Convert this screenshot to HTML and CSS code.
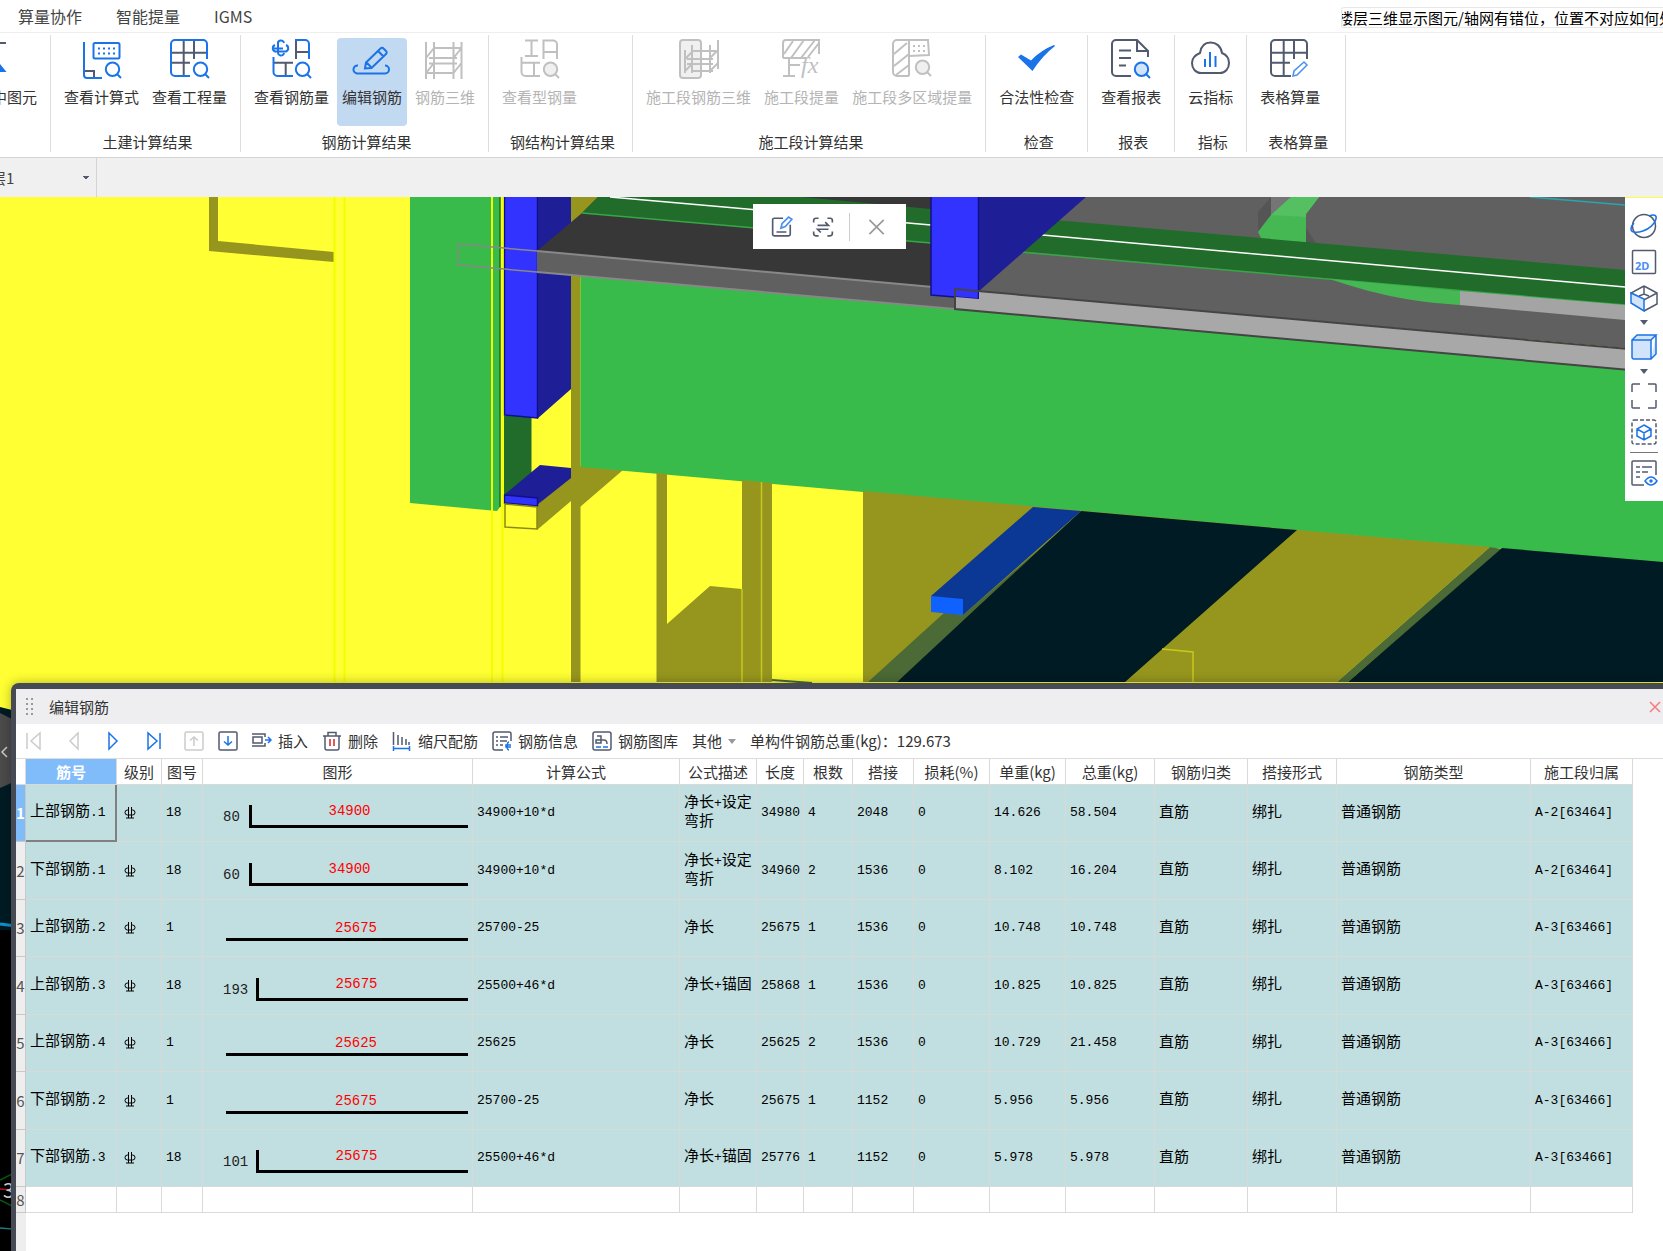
FILE: index.html
```html
<!DOCTYPE html>
<html lang="zh-CN">
<head>
    <meta charset="UTF-8">
    <meta name="viewport" content="width=device-width, initial-scale=1.0">
    <title>编辑钢筋</title>
    <link rel="stylesheet" href="styles.css">
</head>
<body>
    <header class="tabs">
        <nav>
            <a href="#">算量协作</a>
            <a href="#">智能提量</a>
            <a href="#">IGMS</a>
        </nav>
        <input class="search" type="text" aria-label="搜索" value="楼层三维显示图元/轴网有错位，位置不对应如何处理">
    </header>

    <div class="ribbon">
        <section class="group group-cut">
            <div class="tools">
                <button class="tool">
                    <svg class="icon" viewBox="0 0 40 40"><path class="dark" d="M4 4H19"/><path class="solid" d="M9 20L19.500 33H4z"/></svg>
                    选中图元
                </button>
            </div>
        </section>
        <section class="group">
            <div class="tools">
                <button class="tool">
                    <svg class="icon" viewBox="0 0 40 40"><path d="M2 3v33a3 3 0 0 0 3 3h15"/><path class="dark" d="M3 32h9v6"/><rect x="11.500" y="4" width="26" height="15.500" rx="1.500"/><path class="dots" d="M16 9.500h17M16 14.500h17"/><use href="#lens"/></svg>
                    查看计算式
                </button>
                <button class="tool">
                    <svg class="icon" viewBox="0 0 40 40"><path class="dark" d="M13.700 1v36M24 1v19M1 13.700h36M1 23.700h19"/><path d="M20 37H5a4 4 0 0 1-4-4V5a4 4 0 0 1 4-4h28a4 4 0 0 1 4 4v15"/><use href="#lens"/></svg>
                    查看工程量
                </button>
            </div>
            <h2>土建计算结果</h2>
        </section>
        <section class="group">
            <div class="tools">
                <button class="tool">
                    <svg class="icon" viewBox="0 0 40 40"><path class="dark" d="M24 1v19M24 13h13M1 23.700h20M13.700 24v13"/><path d="M23 1h10a4 4 0 0 1 4 4v15M1.500 18v15a4 4 0 0 0 4 4H21"/><path d="M12 4a3 3 0 0 0-6 1v8a3 3 0 0 0 6 1M3 6a3.500 3.500 0 0 0 0 6.500h11a3.500 3.500 0 0 0 0-6.500M2 9.500h9"/><use href="#lens"/></svg>
                    查看钢筋量
                </button>
                <button class="tool active">
                    <svg class="icon" viewBox="0 0 40 40"><path d="M6 26.500a4 4 0 0 0-1 8h28a4 4 0 0 0 0-8"/><path d="M13 29.500l1-6L28.500 9.500a2 2 0 0 1 3 0l2.500 2.500a2 2 0 0 1 0 3L19.500 29zM26 12l5.500 5.500M15 24l4 4"/></svg>
                    编辑钢筋
                </button>
                <button class="tool" disabled>
                    <svg class="icon" viewBox="0 0 40 40"><path d="M1 3v37M9 3v37M28.500 3v37M36.500 3v37M9 9h19.500M4 19h28M4 24.500h28M9 34h19.500M1 19l8-10M1 34l8-10M28.500 19l8-10M28.500 34l8-10M28.500 9h8M1 34h8"/></svg>
                    钢筋三维
                </button>
            </div>
            <h2>钢筋计算结果</h2>
        </section>
        <section class="group">
            <div class="tools">
                <button class="tool" disabled>
                    <svg class="icon" viewBox="0 0 40 40"><path d="M5 1.500h13M11.500 1v16M5 17h13M23.500 20V1.500H33a4 4 0 0 1 4 4V20M24 13h13M1.500 18v15a4 4 0 0 0 4 4H20M1 23.700h19M14 24v13"/><use href="#lens"/></svg>
                    查看型钢量
                </button>
            </div>
            <h2>钢结构计算结果</h2>
        </section>
        <section class="group">
            <div class="tools">
                <button class="tool" disabled>
                    <svg class="icon" viewBox="0 0 40 40"><rect class="pale" x="1" y="1" width="21" height="38" rx="3"/><path d="M6 11v23M13 6v28M31 6v28M39 1v29M13 12h24M8 20h26M8 25h26M12 32h22M6 20l8-8M6 32l8-8M30 20l9-9M31 32l8-8"/></svg>
                    施工段钢筋三维
                </button>
                <button class="tool" disabled>
                    <svg class="icon" viewBox="0 0 40 40"><path d="M1 19V4a3 3 0 0 1 3-3h33v14M1 19h24M2 15L11 2M9 19L22 1M19 19L33 1M26 18L37 4M7 19v18M1 37h12M7 26h11"/><text x="19" y="34">fx</text></svg>
                    施工段提量
                </button>
                <button class="tool" disabled>
                    <svg class="icon" viewBox="0 0 40 40"><path d="M17 37H5a4 4 0 0 1-4-4V5a4 4 0 0 1 4-4h31l1 15-20 1M17 1v36M2 15L15 4M2 27l15-12M4 36l13-10"/><path class="dots" d="M21 7h14M21 12h14"/><use href="#lens" y="-2"/></svg>
                    施工段多区域提量
                </button>
            </div>
            <h2>施工段计算结果</h2>
        </section>
        <section class="group">
            <div class="tools">
                <button class="tool">
                    <svg class="icon" viewBox="0 0 40 40"><path class="solid" d="M1 18l3-2.500 10 6Q24 11 37 6l1 1Q25 17 15.500 32z"/></svg>
                    合法性检查
                </button>
            </div>
            <h2>检查</h2>
        </section>
        <section class="group">
            <div class="tools">
                <button class="tool">
                    <svg class="icon" viewBox="0 0 40 40"><path class="dark" d="M20 37H5a4 4 0 0 1-4-4V5a4 4 0 0 1 4-4h21l11 11v6M26 1v11h11M8 11.500h12M8 19h12M8 26.500h7"/><use class="tint" href="#lens"/></svg>
                    查看报表
                </button>
            </div>
            <h2>报表</h2>
        </section>
        <section class="group">
            <div class="tools">
                <button class="tool">
                    <svg class="icon" viewBox="0 0 40 40"><path class="dark" d="M9 14C10 7 14 3.500 19.500 3.500S30 7 31 14c5 2 7 6 7 10 0 6-4 10-9 10H10C5 34 1 30 1 24c0-4 3-8 8-10z"/><path d="M14 20v8M19 13v15M24.500 17v11"/></svg>
                    云指标
                </button>
            </div>
            <h2>指标</h2>
        </section>
        <section class="group">
            <div class="tools">
                <button class="tool">
                    <svg class="icon" viewBox="0 0 40 40"><path class="dark" d="M21 37H5a4 4 0 0 1-4-4V5a4 4 0 0 1 4-4h28a4 4 0 0 1 4 4v15M13.700 1v36M24 1v19M1 13.700h36M1 23.700h19"/><path class="thin" d="M23 37l1-5 10-9 3 3-10 10z"/></svg>
                    表格算量
                </button>
            </div>
            <h2>表格算量</h2>
        </section>
    </div>

    <div class="floor-bar">
        <select class="floor" aria-label="楼层">
            <option>层1</option>
        </select>
    </div>

    <main class="workspace">
        <svg class="scene" viewBox="0 197 1663 1054" preserveAspectRatio="xMinYMin slice">
            <rect fill="#ffff33" y="197" width="1663" height="520"/>
            <!-- left edge strip below the yellow wall -->
            <path fill="#001b24" d="M0 707l16 4v540H0z"/>
            <path fill="#4b4b4b" d="M0 713l16 8v60l-16 7z"/>
            <path fill="#000" d="M0 930h16v321H0z"/>
            <path stroke="#0d94d4" stroke-width="3" d="M0 924l16 2"/>
            <path fill="none" stroke="#ccc" d="M7 747l-5 5 5 5"/>
            <path fill="none" stroke="#0a5a12" d="M0 1180l12-6M0 1200l12 6"/>
            <path stroke="#b01818" d="M0 1189l12 1"/>
            <path stroke="#1b7f86" d="M0 1228l12 1"/>
            <text x="3" y="1198" fill="#ddd" font-size="20">3</text>

            <!-- wall opening and columns on the left -->
            <path fill="#96961e" d="M209 197h9v44l116 11v10l-125-11z"/>
            <path stroke="#f2ff00" stroke-width="2" d="M334.500 197v485M344.500 197v485"/>
            <path fill="#39bb4b" d="M410 197h90v310l-3 4-87-8z"/>
            <path stroke="#216b2b" d="M500 197v310"/>
            <path fill="#216b2b" d="M504 416h27.500v57L504 500z"/>
            <path fill="#1e1e96" d="M537 197h34v192l-34 30z"/>
            <path fill="#3333ff" stroke="#10108a" stroke-width="1.500" d="M504.500 190h33v228l-33-3z"/>
            <path fill="#96961e" d="M537 504l34-28v25l-34 29zM580 466l43 4-43 37z"/>
            <path fill="#1e1e96" d="M504 495l36-30 31 3v10l-34 27z"/>
            <path fill="#3333ff" stroke="#10108a" d="M504.500 495l33 3v8l-33-3z"/>
            <path fill="#ffff33" stroke="#8a8a10" stroke-width="1.500" d="M505 504l32 3v22l-32-2z"/>
            <path stroke="#f2ff00" stroke-width="2" d="M492 197v485M502.500 197v485"/>
            <path fill="#96961e" d="M571 197h9.500v485H571zM580 197h20l-20 22z"/>

            <!-- slab and rear beam -->
            <path fill="#373737" d="M582 213l16-16h333v91l-394-37z"/>
            <path fill="#216b2b" d="M582 213l16-16h204l129 12v34z"/>
            <path fill="none" stroke="#35a845" d="M582 213l349 30"/>
            <path stroke="#fff" stroke-width="1.500" d="M610 197l321 28"/>
            <path fill="#606060" d="M537 251l418 38v20l-418-37zM955 289l22-92h648v151z"/>
            <path fill="#757575" d="M1271 197h20l-20 19z"/>
            <path fill="#555" d="M1258 212l13-15v18l-13 16zM1306 228l10 15h-10z"/>
            <path fill="#45b854" d="M1291 197h28l-13 17v30l-44-4-4-8 13-17z"/>
            <path fill="#54c062" d="M1291 197h28l-13 17v3l-35-2z"/>
            <path fill="#216b2b" d="M1020 217l605 53v35l-605-54z"/>
            <path stroke="#35a845" d="M1020 252l605 53"/>
            <path stroke="#fff" stroke-width="1.500" d="M1020 233l605 54"/>
            <path fill="#45b854" d="M1330 279l130 12v14c-50-3-90-12-130-26z"/>
            <path fill="#a4a4a4" d="M1460 291l165 14v15l-165-15z"/>
            <path stroke="#2aa5ae" d="M1530 197l95 8"/>
            <path fill="#39bb4b" d="M580.500 276l375 33 707.500 64v190l-1082.500-96z"/>
            <path fill="none" stroke="#888" stroke-width="2" d="M537 251l418 38M537 272l418 37"/>
            <path fill="none" stroke="#888" d="M537 251l-79-7v21l79 7"/>
            <path fill="#1e1e96" d="M978 197h108l-108 95z"/>
            <path fill="#3333ff" stroke="#10108a" stroke-width="1.500" d="M931 190h47.500v109l-47.500-4z"/>
            <path fill="#a8a8a8" d="M979 291l684 61v21l-707-64v-12l23 2z"/>
            <path fill="none" stroke="#444" stroke-width="2" d="M1663 352l-708-63v20l708 64"/>

            <!-- below the main beam -->
            <path fill="#96961e" d="M656.500 473l10.500 1v150l43-38 32 3v-109l30 3v199H656.500z"/>
            <path stroke="#c8c81e" d="M742 589v93M761.500 482v200"/>
            <path stroke="#4b6a35" stroke-width="2" d="M772 680l40 3"/>
            <path fill="#96961e" d="M863 491l434 39 193 17-153 135H863z"/>
            <path fill="#4b6a35" d="M868 682l77-70 18 3 110-95-176 162zM1490 547l12 2-154 133h-11z"/>
            <path fill="#001b24" d="M1081 511l216 19-172 152H897zM1502 548l161 14v120h-315z"/>
            <path fill="#0b3894" d="M931 596l102-89 48 4-118 104z"/>
            <path fill="#0f62ff" d="M931 596l32 3v16l-32-3z"/>
            <path fill="none" stroke="#c8c81e" d="M1162 649l31 3v30"/>
        </svg>

        <div class="stage">
            <div class="float-bar">
                <button aria-label="编辑"><svg viewBox="0 0 20 20"><path class="dark" d="M11 2H3a1.500 1.500 0 0 0-1.500 1.500v13A1.500 1.500 0 0 0 3 18h13a1.500 1.500 0 0 0 1.500-1.500V8M5 14.500h9"/><path class="thin" d="M9 11l1-4 6-6 3 2-6 6.500z"/></svg></button>
                <button aria-label="交换"><svg viewBox="0 0 20 20"><path class="dark" d="M1.500 6V4A2 2 0 0 1 3.500 2H6M14 2h2.500a2 2 0 0 1 2 2v2M1.500 14v2a2 2 0 0 0 2 2H6M14 18h2.500a2 2 0 0 0 2-2v-2M5 8.500h10l-3-3M15 12H5l3 3"/></svg></button>
                <span class="split"></span>
                <button aria-label="关闭"><svg viewBox="0 0 20 20"><path class="grey" d="M4 3.500l13 13M17 3.500l-13 13"/></svg></button>
            </div>

            <div class="view-bar">
                <button aria-label="动态观察"><svg viewBox="0 0 28 28"><circle class="dark" cx="14" cy="14" r="11.500"/><path d="M19 4c5-2 8-1 7 3-1 5-7 10-13 12S1 21 1 17c0-2 1-4 3-6"/></svg></button>
                <button aria-label="二维"><svg viewBox="0 0 28 28"><rect class="dark" x="2.500" y="2.500" width="23" height="23" rx="1"/><text x="5" y="22">2D</text></svg></button>
                <button aria-label="视角"><svg viewBox="0 0 28 28"><path class="dark" d="M14 2l13 7v11l-13 7M14 2L1 9l13 7 13-7M14 2v8M9 12l5-2 5 2"/><path class="tint" d="M1 9l13 6v12L1 19z"/></svg></button>
                <span class="caret"></span>
                <button aria-label="显示模式"><svg viewBox="0 0 28 28"><path class="tint" d="M2 7h19v19H4a2 2 0 0 1-2-2zM2 7l5-5h19l-5 5M26 2v19l-5 5"/></svg></button>
                <span class="caret"></span>
                <button aria-label="全屏"><svg viewBox="0 0 28 28"><path class="dark" d="M2 10V3a1 1 0 0 1 1-1h7M18 2h7a1 1 0 0 1 1 1v7M2 18v7a1 1 0 0 0 1 1h7M18 26h7a1 1 0 0 0 1-1v-7"/></svg></button>
                <button aria-label="局部三维"><svg viewBox="0 0 28 28"><rect class="dark" x="2" y="2" width="24" height="24" rx="2" stroke-dasharray="4 2"/><path d="M14 7l7 4v7l-7 4-7-4v-7zM7 11l7 4 7-4M14 15v7"/></svg></button>
                <hr>
                <button aria-label="显示设置"><svg viewBox="0 0 28 28"><path class="dark" d="M14 26H3a1 1 0 0 1-1-1V3a1 1 0 0 1 1-1h22a1 1 0 0 1 1 1v13M6 8h4M12 8h10M6 13h4M12 13h6M6 18h4"/><path d="M15 22q6-8 12 0-6 8-12 0z"/><circle cx="21" cy="22" r="1"/></svg></button>
            </div>
        </div>

        <section class="panel">
            <div class="panel-title">
                <svg class="grip" viewBox="0 0 8 18"><path d="M1 1h7M1 6h7M1 11h7M1 16h7"/></svg>
                <h1>编辑钢筋</h1>
                <button class="close" aria-label="关闭"><svg viewBox="0 0 12 12"><path d="M1 1l10 10M11 1L1 11"/></svg></button>
            </div>

            <div class="toolbar">
                <div class="steps">
                    <button aria-label="首条" disabled><svg viewBox="0 0 20 20"><path d="M3 2v16M16 2v16L7 10z"/></svg></button>
                    <button aria-label="上一条" disabled><svg viewBox="0 0 20 20"><path d="M14 2v16L6 10z"/></svg></button>
                    <button aria-label="下一条"><svg viewBox="0 0 20 20"><path d="M5 2v16l8-8z"/></svg></button>
                    <button aria-label="末条"><svg viewBox="0 0 20 20"><path d="M4 2v16l9-8zM16 2v16"/></svg></button>
                    <button aria-label="上移" disabled><svg viewBox="0 0 20 20"><rect x="1" y="1" width="18" height="18" rx="1.500"/><path d="M10 15V6M6 9.500L10 6l4 3.500"/></svg></button>
                </div>
                <button aria-label="下移"><svg viewBox="0 0 20 20"><rect class="dark" x="1" y="1" width="18" height="18" rx="1.500"/><path d="M10 5v9M6 10.500l4 3.500 4-3.500"/></svg></button>
                <button><svg viewBox="0 0 20 20"><path class="dark" d="M0 3h11M0 15h11M1 6h9v6H1zM10 3h3v3M11 15h2v-3"/><path d="M13 9h6M16 6l3 3-3 3"/></svg>插入</button>
                <button><svg viewBox="0 0 20 20"><path class="dark" d="M1 5h18M6 5V1.500h8V5M3 5v12a2 2 0 0 0 2 2h10a2 2 0 0 0 2-2V5"/><path class="red" d="M8 8v7M12 8v7"/></svg>删除</button>
                <button><svg viewBox="0 0 20 20"><path class="dark" d="M1.500 1v13M6 4v10M10 6v8M14 8v6M17 11v3"/><path d="M1 17.500h17M1.500 15v5M17.500 15v5"/></svg>缩尺配筋</button>
                <button><svg viewBox="0 0 20 20"><path class="dark" d="M11 19H3a2 2 0 0 1-2-2V3a2 2 0 0 1 2-2h14a2 2 0 0 1 2 2v7M4 6h2M8 6h8M4 10h2M8 10h7M4 14h2M8 14h3"/><path d="M17 11c-2 0-3 8 0 8M19 14h-5v2h5"/></svg>钢筋信息</button>
                <button><svg viewBox="0 0 20 20"><rect class="dark" x="1" y="1" width="18" height="18" rx="2"/><path class="dark" d="M5 5h4v7H4V9h8q3 0 3 4"/><path d="M4 16h5M11 16h5"/></svg>钢筋图库</button>
                <button>其他<span class="caret"></span></button>
                <output>单构件钢筋总重(kg)：129.673</output>
            </div>

            <div class="grid">
                <table>
                    <colgroup>
                        <col class="c10"><col class="c91"><col class="c45"><col class="c41"><col class="c270"><col class="c207">
                        <col class="c77"><col class="c47"><col class="c49"><col class="c61"><col class="c76"><col class="c76">
                        <col class="c89"><col class="c93"><col class="c89"><col class="c194"><col class="c102">
                    </colgroup>
                    <thead>
                        <tr>
                            <th></th>
                            <th class="current">筋号</th>
                            <th>级别</th>
                            <th>图号</th>
                            <th>图形</th>
                            <th>计算公式</th>
                            <th>公式描述</th>
                            <th>长度</th>
                            <th>根数</th>
                            <th>搭接</th>
                            <th>损耗(%)</th>
                            <th>单重(kg)</th>
                            <th>总重(kg)</th>
                            <th>钢筋归类</th>
                            <th>搭接形式</th>
                            <th>钢筋类型</th>
                            <th>施工段归属</th>
                        </tr>
                    </thead>
                    <tbody id="bars"></tbody>
                </table>
            </div>
        </section>
    </main>

    <svg class="defs">
        <symbol id="lens" viewBox="0 0 40 40"><circle cx="30.500" cy="30.300" r="6.700"/><path d="M35 35l4 4"/></symbol>
    </svg>

    <script>
        // name, shape no., hook, straight length, formula, description, length, count, lap, unit weight, total weight, section
        const bars = [
            ['上部钢筋.1', 18, 80, 34900, '34900+10*d', '净长+设定弯折', 34980, 4, 2048, '14.626', '58.504', 'A-2[63464]'],
            ['下部钢筋.1', 18, 60, 34900, '34900+10*d', '净长+设定弯折', 34960, 2, 1536, '8.102', '16.204', 'A-2[63464]'],
            ['上部钢筋.2', 1, 0, 25675, '25700-25', '净长', 25675, 1, 1536, '10.748', '10.748', 'A-3[63466]'],
            ['上部钢筋.3', 18, 193, 25675, '25500+46*d', '净长+锚固', 25868, 1, 1536, '10.825', '10.825', 'A-3[63466]'],
            ['上部钢筋.4', 1, 0, 25625, '25625', '净长', 25625, 2, 1536, '10.729', '21.458', 'A-3[63466]'],
            ['下部钢筋.2', 1, 0, 25675, '25700-25', '净长', 25675, 1, 1152, '5.956', '5.956', 'A-3[63466]'],
            ['下部钢筋.3', 18, 101, 25675, '25500+46*d', '净长+锚固', 25776, 1, 1152, '5.978', '5.978', 'A-3[63466]']
        ];

        const grade = '<svg class="grade" viewBox="0 0 12 13"><path d="M5 4H3.500a2.500 2.500 0 0 0 0 5h5a2.500 2.500 0 0 0 0-5H7M4.500 1v11M7.500 1v11M2 12h8"/></svg>';

        // latin runs use the narrow monospace face
        function mono(value) {
            return String(value).replace(/[\x21-\x7e]+/g, '<span class="mono">$&</span>');
        }

        function drawShape(hook, length) {
            if (!hook) {
                return `<svg class="shape" viewBox="0 0 269 56"><path d="M23 39.500H265"/><text class="len" x="153" y="32">${length}</text></svg>`;
            }
            const x = hook > 99 ? 54.5 : 47.5;
            return `<svg class="shape" viewBox="0 0 269 56"><path d="M${x} 20V41.500H265"/><text x="20" y="36">${hook}</text><text class="len" x="${x + 99}" y="30">${length}</text></svg>`;
        }

        let html = '';
        bars.forEach(function (b, i) {
            const cells = [b[4], b[5], b[6], b[7], b[8], 0, b[9], b[10], '直筋', '绑扎', '普通钢筋', b[11]];
            html += `<tr><th>${i + 1}</th><td>${mono(b[0])}</td><td>${grade}</td><td>${mono(b[1])}</td>`;
            html += `<td class="draw">${drawShape(b[2], b[3])}</td>`;
            html += cells.map(c => `<td>${mono(c)}</td>`).join('') + '</tr>';
        });
        html += '<tr class="blank"><th>8</th>' + '<td></td>'.repeat(16) + '</tr>';
        document.getElementById('bars').innerHTML = html;
    </script>
</body>
</html>
```
FILE: styles.css
```css
* {
    box-sizing: border-box;
}

body {
    margin: 0;
    height: 100vh;
    display: flex;
    flex-direction: column;
    overflow: hidden;
    font-family: "Noto Sans CJK SC", sans-serif;
    font-size: 15px;
    line-height: 20px;
    color: #333;
    background-color: #fff;
}

button {
    padding: 0;
    border: 0;
    background: none;
    font: inherit;
    color: inherit;
    white-space: nowrap;
    cursor: pointer;
}

svg {
    flex-shrink: 0;
    fill: none;
    stroke: #1a73e8;
    stroke-width: 1.5;
}

svg .dark {
    stroke: #515a6e;
}

svg .grey {
    stroke: #999;
}

svg .red {
    stroke: #e02020;
}

svg .tint {
    fill: #d2e3fc;
}

svg .thin {
    stroke: #4a90f0;
    stroke-width: 1.5;
}

svg text {
    stroke: none;
}

h1, h2 {
    margin: 0;
    font-size: 15px;
    font-weight: normal;
}

.defs {
    position: absolute;
    width: 0;
    height: 0;
}

.caret {
    border: 4px solid transparent;
    border-top: 5px solid #515a6e;
    border-bottom: 0;
}

/* tabs */
.tabs {
    flex: 0 0 32px;
    display: flex;
    justify-content: space-between;
    border-bottom: 1px solid #eee;
}

.tabs nav {
    display: flex;
    gap: 34px;
    padding: 6px 18px;
    font-size: 16px;
}

.tabs a {
    color: #444;
    text-decoration: none;
}

.search {
    width: 322px;
    height: 21px;
    margin-top: 7px;
    padding: 0;
    border: 1px solid #e8e8e8;
    border-right: 0;
    border-radius: 3px 0 0 3px;
    font: inherit;
    color: #000;
    text-indent: -4px;
}

/* ribbon */
.ribbon {
    flex: 0 0 125px;
    display: flex;
    padding: 2px 0 5px;
    border-bottom: 1px solid #d4d4d4;
}

.group {
    display: flex;
    flex-direction: column;
    justify-content: space-between;
    padding: 3px 0 0;
    border-right: 1px solid #ddd;
}

.group-cut {
    width: 51px;
    overflow: hidden;
}

.group-cut .tools {
    justify-content: flex-end;
}

.group h2 {
    padding: 0 17px 0 21px;
    text-align: center;
}

.tools {
    display: flex;
    gap: 3px;
    padding: 0 8px;
}

.tool {
    flex-shrink: 0;
    display: flex;
    flex-direction: column;
    align-items: center;
    gap: 8px;
    height: 88px;
    padding: 1px 5px;
    border-radius: 4px;
}

.tool.active {
    background-color: #c2d9f2;
}

.tool:disabled {
    color: #b4b4b4;
}

.icon {
    width: 40px;
    height: 40px;
    overflow: visible;
    stroke-width: 2;
}

.icon .solid {
    fill: #1a73e8;
    stroke: none;
}

.icon .dots {
    stroke-dasharray: 2 3;
}

.icon text {
    fill: #c0c0c0;
    font: italic 24px "Liberation Serif", serif;
}

.tool:disabled .icon {
    stroke: #c0c0c0;
}

.icon .pale,
.tool:disabled .icon use {
    fill: #f0f0f0;
}

/* floor selector */
.floor-bar {
    flex: 0 0 39px;
    display: flex;
    background-color: #f0f0f0;
}

.floor {
    width: 97px;
    padding: 0;
    border: 0;
    border-right: 1px solid #d4d4d4;
    appearance: none;
    font: inherit;
    color: #444;
    text-indent: -9px;
    background: linear-gradient(45deg, transparent 75%, #515a6e 75%) 79px 18px / 7px 7px no-repeat, linear-gradient(-45deg, transparent 75%, #515a6e 75%) 86px 18px / 7px 7px no-repeat;
}

/* model view */
.workspace {
    position: relative;
    flex: 1;
    display: flex;
    flex-direction: column;
    min-height: 0;
}

.scene {
    position: absolute;
    width: 100%;
    height: 100%;
    stroke: none;
}

.stage {
    position: relative;
    flex: 0 0 486px;
}

.float-bar {
    position: absolute;
    top: 7px;
    left: 753px;
    display: flex;
    align-items: center;
    gap: 19px;
    height: 45px;
    padding: 0 19px 0 18px;
    background-color: #fff;
}

.float-bar button,
.float-bar svg {
    display: block;
    width: 22px;
    height: 22px;
}

.float-bar .split {
    width: 1px;
    height: 28px;
    margin: 0 -4px;
    background-color: #ccc;
}

.view-bar {
    position: absolute;
    top: 1px;
    right: 0;
    display: flex;
    flex-direction: column;
    align-items: center;
    gap: 8px;
    width: 38px;
    padding: 14px 0;
    background-color: #fff;
}

.view-bar button,
.view-bar svg {
    display: block;
    width: 28px;
    height: 28px;
}

.view-bar text {
    fill: #4a90f0;
    font: bold 11px "Noto Sans", sans-serif;
}

.view-bar hr {
    width: 28px;
    margin: -2px 0;
    border: 0;
    border-top: 1px solid #777;
}

/* rebar panel */
.panel {
    position: relative;
    flex: 1;
    display: flex;
    flex-direction: column;
    margin-left: 11px;
    border-top: 6px solid #454a54;
    border-left: 5px solid #454a54;
    border-radius: 8px 0 0 0;
    background-color: #fff;
    box-shadow: 0 0 12px rgba(0, 0, 0, 0.3);
}

.panel-title {
    flex: 0 0 35px;
    display: flex;
    align-items: center;
    padding: 0 2px 0 9px;
    background-color: #eeeef0;
}

.panel-title h1 {
    flex: 1;
    padding-left: 16px;
}

.grip {
    width: 8px;
    height: 18px;
    stroke: #999;
    stroke-width: 2;
    stroke-dasharray: 2 3;
}

.close svg {
    display: block;
    width: 12px;
    height: 12px;
    stroke: #f47c7c;
}

.toolbar {
    flex: 0 0 35px;
    display: flex;
    align-items: center;
    gap: 14px;
    border-bottom: 1px solid #ddd;
}

.toolbar button {
    display: flex;
    align-items: center;
    gap: 6px;
}

.toolbar svg {
    width: 20px;
    height: 20px;
}

.toolbar button:disabled svg {
    stroke: #ccc;
}

.toolbar .caret {
    border-top-color: #999;
}

.steps {
    display: flex;
    gap: 4px;
    margin-right: -8px;
}

.steps button {
    justify-content: center;
    width: 36px;
}

.grid {
    flex: 1;
    background: linear-gradient(to right, #eee 10px, #fff 10px);
}

table {
    width: calc(100% - 30px);
    table-layout: fixed;
    border-spacing: 0;
}

.c10 { width: 10px; }
.c41 { width: 41px; }
.c45 { width: 45px; }
.c47 { width: 47px; }
.c49 { width: 49px; }
.c61 { width: 61px; }
.c76 { width: 76px; }
.c77 { width: 77px; }
.c89 { width: 89px; }
.c91 { width: 91px; }
.c93 { width: 93px; }
.c102 { width: 102px; }
.c194 { width: 194px; }
.c207 { width: 207px; }
.c270 { width: 270px; }

th, td {
    padding: 0;
    border-right: 1px solid #d9d9d9;
    border-bottom: 1px solid #d9d9d9;
}

th {
    font-weight: normal;
    white-space: nowrap;
}

thead th {
    height: 26px;
    background-color: #fff;
}

thead .current {
    background-color: #80bbfa;
    font-weight: bold;
    color: #fff;
}

tbody th {
    overflow: hidden;
    background-color: #eee;
    border-color: #c8c8c8;
    color: #555;
}

tbody tr:first-child th {
    background-color: #80bbfa;
    font-weight: bold;
    color: #fff;
}

td {
    height: 57px;
    padding: 0 0 5px 4px;
    background-color: #c1dfe1;
    line-height: 18px;
    color: #000;
}

tr:nth-child(even) td {
    height: 58px;
}

tr:first-child td:nth-child(2) {
    border-right: 2px solid #808080;
    border-bottom: 2px solid #808080;
}

tbody .blank td {
    height: 26px;
    background-color: #fff;
}

.mono {
    font: 13px "Liberation Mono", monospace;
}

.grade {
    display: block;
    width: 12px;
    height: 13px;
    margin: 4px 0 0 3px;
    stroke: #000;
    stroke-width: 1;
}

td.draw {
    padding: 0;
}

.shape {
    display: block;
    width: 100%;
    height: 56px;
    stroke: #000;
    stroke-width: 3;
}

.shape text {
    fill: #222;
    font: 14px "Liberation Mono", monospace;
}

.shape .len {
    fill: #f00;
    text-anchor: middle;
}
```
